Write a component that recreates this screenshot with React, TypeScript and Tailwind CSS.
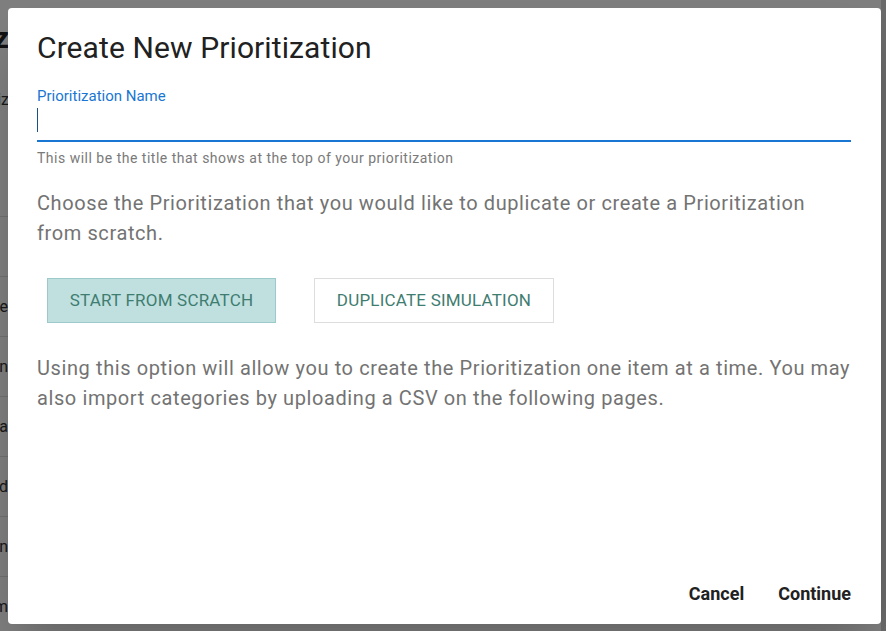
import React from "react";

const rows = ["Sample Free", "Plan Design", "Benefit Data", "Fund Upload Field", "Some Fields Remain", "Program Term"];

export default function App() {
  return (
    <div className="relative w-[886px] h-[631px] overflow-hidden bg-white" style={{ fontFamily: "Roboto, 'Noto Sans', sans-serif" }}>
      {/* background page */}
      <div className="flex flex-col w-full h-full pr-[5px]">
        <div className="h-[75px] flex items-center shrink-0">
          <div className="w-[9px] overflow-hidden flex justify-end whitespace-nowrap text-[30px] font-bold text-[#222]">Prioritiz</div>
        </div>
        <div className="h-[50px] flex items-center justify-between shrink-0">
          <div className="w-[9px] overflow-hidden flex justify-end whitespace-nowrap text-[16px] text-[#333]">Prioritiz</div>
          <div className="w-[5px] overflow-hidden flex justify-start whitespace-nowrap text-[16px] text-[#333]">o</div>
        </div>
        <div className="h-[92px] border-b border-[#e0e0e0] shrink-0"></div>
        {[""].concat(rows).map((r, i) => (
          <div key={i} className="h-[60px] border-b border-[#e0e0e0] flex items-center shrink-0">
            <div className="w-[8px] overflow-hidden flex justify-end whitespace-nowrap text-[16px] text-[#333]">{r}</div>
          </div>
        ))}
      </div>
      {/* backdrop */}
      <div className="absolute inset-0 bg-black/50"></div>
      <div className="absolute top-0 right-0 w-[5px] h-full bg-[#6b6b6b]"></div>
      {/* dialog */}
      <div className="absolute left-[8px] top-[8px] w-[873px] h-[616px] bg-white rounded-[4px] shadow-2xl flex flex-col pt-[22px] pl-[29px] pr-[30px]">
        <h2 className="text-[30px] leading-[36px] text-[#212121] font-normal tracking-[0.1px]">Create New Prioritization</h2>
        <label className="mt-[22px] text-[15px] leading-[16px] text-[#1976d2]">Prioritization Name</label>
        <div className="h-[38px] border-b-2 border-[#1976d2] relative">
          <div className="absolute left-0 top-[4px] w-[1px] h-[24px] bg-[#1a4f8f]"></div>
        </div>
        <p className="mt-[8px] text-[14px] leading-[16px] text-[#7a7a7a] tracking-[0.5px]">This will be the title that shows at the top of your prioritization</p>
        <p className="mt-[22px] text-[20px] leading-[30px] text-[#737373] tracking-[0.6px]">
          Choose the Prioritization that you would like to duplicate or create a Prioritization from scratch.
        </p>
        <div className="mt-[30px] ml-[10px] flex gap-[38px]">
          <button className="w-[229px] h-[45px] bg-[#c0e0e0] border border-[#9ccaca] text-[#3f7d70] text-[17px] tracking-[0.2px]">START FROM SCRATCH</button>
          <button className="w-[240px] h-[45px] bg-white border border-[#dddddd] text-[#3f7d70] text-[17px] tracking-[0.2px]">DUPLICATE SIMULATION</button>
        </div>
        <p className="mt-[30px] text-[20px] leading-[30px] text-[#737373] tracking-[0.6px]">
          Using this option will allow you to create the Prioritization one item at a time. You may also import categories by uploading a CSV on the following pages.
        </p>
        <div className="mt-auto mb-[20px] flex justify-end gap-[34px]">
          <button className="text-[18px] leading-[20px] font-bold text-[#212121]">Cancel</button>
          <button className="text-[18px] leading-[20px] font-bold text-[#212121]">Continue</button>
        </div>
      </div>
    </div>
  );
}
